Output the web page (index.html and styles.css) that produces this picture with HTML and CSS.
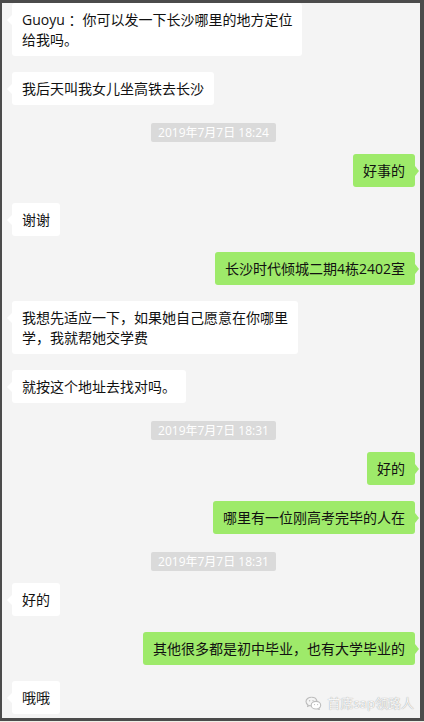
FILE: index.html
```html
<!DOCTYPE html>
<html lang="zh">
<head>
<meta charset="utf-8">
<title>聊天记录</title>
<link rel="stylesheet" href="styles.css">
</head>
<body>
<div class="frame">
  <div class="chat">
    <div class="msg left">Guoyu ：你可以发一下长沙哪里的地方定位<br>给我吗。</div>
    <div class="msg left">我后天叫我女儿坐高铁去长沙</div>
    <div class="ts">2019年7月7日 18:24</div>
    <div class="msg right">好事的</div>
    <div class="msg left">谢谢</div>
    <div class="msg right">长沙时代倾城二期4栋2402室</div>
    <div class="msg left">我想先适应一下，如果她自己愿意在你哪里<br>学，我就帮她交学费</div>
    <div class="msg left">就按这个地址去找对吗。</div>
    <div class="ts">2019年7月7日 18:31</div>
    <div class="msg right">好的</div>
    <div class="msg right">哪里有一位刚高考完毕的人在</div>
    <div class="ts">2019年7月7日 18:31</div>
    <div class="msg left">好的</div>
    <div class="msg right">其他很多都是初中毕业，也有大学毕业的</div>
    <div class="msg left">哦哦</div>
  </div>
  <div class="watermark">
    <svg class="wm-icon" width="17" height="14" viewBox="0 0 17 14" aria-hidden="true">
      <path d="M6.5 1.2C3.4 1.2 1 3.2 1 5.6c0 1.4.8 2.6 2 3.4l-.5 1.6 1.9-1c.6.2 1.3.3 2.1.3" fill="none" stroke="#bdbdbd" stroke-width="1.1" stroke-linejoin="round"/>
      <path d="M6.5 1.2c2.8 0 5.1 1.7 5.4 3.9" fill="none" stroke="#bdbdbd" stroke-width="1.1"/>
      <path d="M11 5.4c-2.7 0-4.8 1.7-4.8 3.8s2.1 3.8 4.8 3.8c.6 0 1.2-.1 1.7-.3l1.6.9-.4-1.4c1.1-.7 1.8-1.8 1.8-3 0-2.1-2.1-3.8-4.7-3.8z" fill="#fff" stroke="#bdbdbd" stroke-width="1.1" stroke-linejoin="round"/>
      <circle cx="4.6" cy="4.8" r=".7" fill="#bdbdbd"/>
      <circle cx="8" cy="4.6" r=".7" fill="#bdbdbd"/>
      <circle cx="9.5" cy="8.6" r=".6" fill="#bdbdbd"/>
      <circle cx="12.6" cy="8.6" r=".6" fill="#bdbdbd"/>
    </svg>
    <span class="wm-text">首席sap领路人</span>
  </div>
</div>
</body>
</html>
```

FILE: styles.css
```css
html, body {
  margin: 0;
  padding: 0;
  background: #eeeee6;
}

body {
  width: 424px;
  height: 722px;
  overflow: hidden;
  font-family: "Open Sans", "Noto Sans CJK SC", sans-serif;
}

.frame {
  position: relative;
  box-sizing: border-box;
  width: 424px;
  height: 721px;
  border-style: solid;
  border-color: #4b4b4b;
  border-width: 3px 4px 3px 2px;
  background: #f4f4f4;
  overflow: hidden;
}

.chat {
  display: flex;
  flex-direction: column;
  align-items: flex-start;
  padding: 0 5px 0 10px;
}

.msg {
  position: relative;
  box-sizing: border-box;
  max-width: 292px;
  padding: 7px 10px 6px;
  font-size: 14px;
  line-height: 20px;
  color: #111;
  border-radius: 3px;
  margin-top: 16px;
  white-space: nowrap;
}

.msg:first-child {
  margin-top: 0;
}

.msg::before {
  content: "";
  position: absolute;
  top: 12px;
  width: 0;
  height: 0;
  border-style: solid;
}

.left {
  background: #ffffff;
}

.left::before {
  left: -5px;
  border-width: 5px 5px 5px 0;
  border-color: transparent #ffffff transparent transparent;
}

.right {
  align-self: flex-end;
  background: #9eea6a;
}

.right::before {
  right: -4px;
  border-width: 5px 0 5px 4px;
  border-color: transparent transparent transparent #9eea6a;
}

.ts {
  align-self: center;
  margin-top: 18px;
  padding: 1px 7px;
  font-size: 12px;
  line-height: 17px;
  color: #ffffff;
  background: #dadada;
  border-radius: 2px;
}

.ts + .msg {
  margin-top: 12px;
}

.watermark {
  position: absolute;
  right: 6px;
  bottom: 7px;
  display: flex;
  align-items: center;
  gap: 6px;
}

.wm-icon {
  display: block;
}

.wm-text {
  font-family: "Noto Sans CJK SC", sans-serif;
  font-size: 13px;
  line-height: 16px;
  color: #f7f7f7;
  text-shadow: 0 0 1px rgba(0, 0, 0, 0.45);
}
```
